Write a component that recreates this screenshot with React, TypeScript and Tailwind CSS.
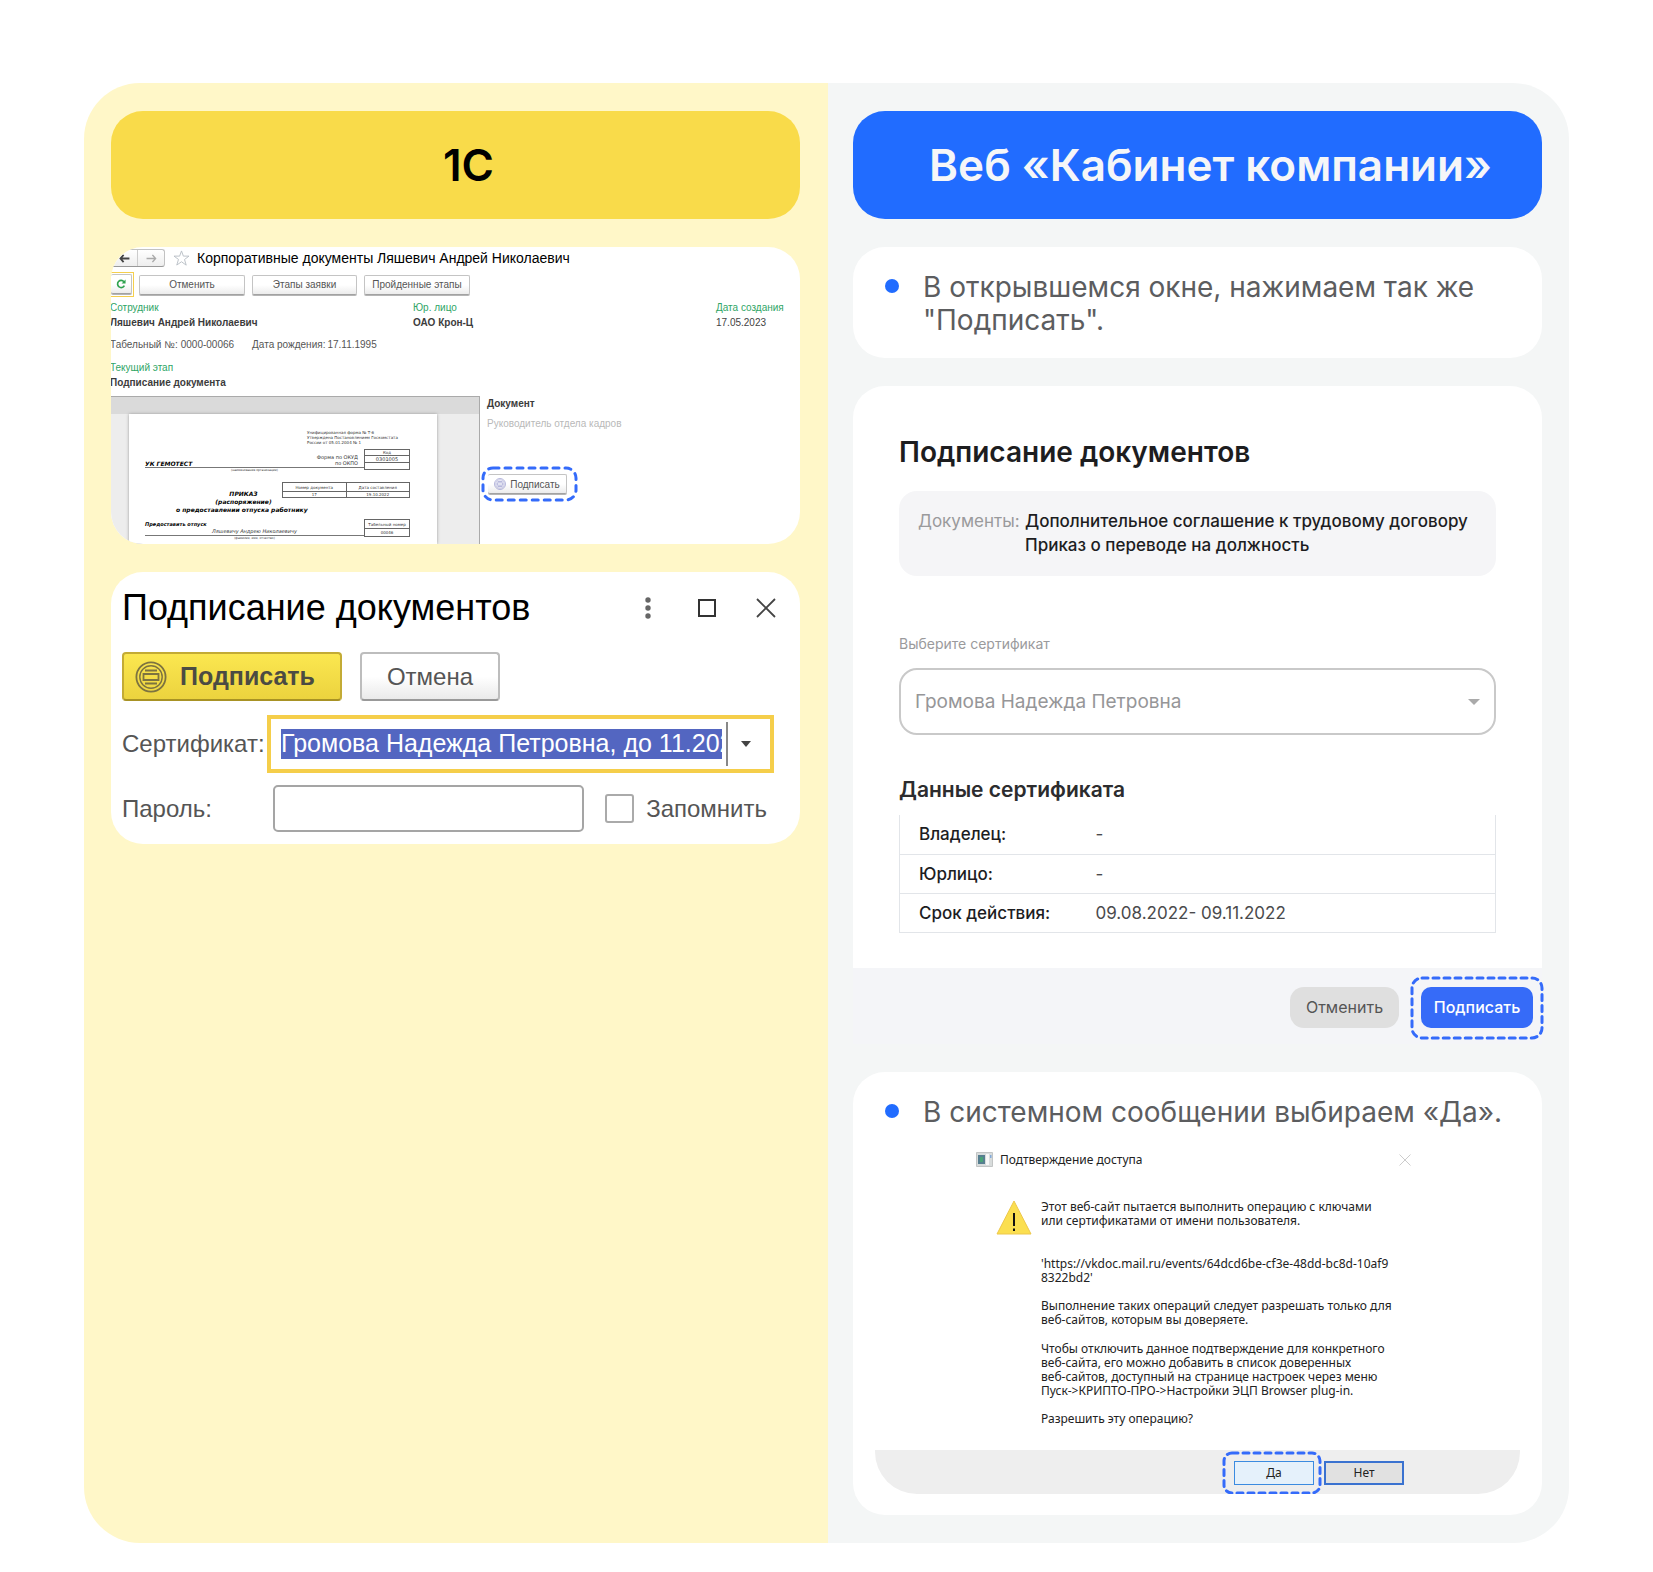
import React, { useState } from "react";

const inter = "font-['Inter','Liberation_Sans',sans-serif]";
const arial = "font-['Liberation_Sans',sans-serif]";

function Outline({ radius, dash, width = 3 }: { radius: number; dash: string; width?: number }) {
  return (
    <svg aria-hidden="true" className="pointer-events-none absolute inset-0 h-full w-full overflow-visible" fill="none">
      <rect width="100%" height="100%" rx={radius} stroke="#346bfa" strokeWidth={width} strokeDasharray={dash} strokeLinecap="round" />
    </svg>
  );
}

function SealIcon({ className, color }: { className: string; color: string }) {
  return (
    <svg aria-hidden="true" viewBox="0 0 32 32" className={className} fill="none" stroke={color} strokeWidth="1.8">
      <circle cx="16" cy="16" r="14.6" />
      <circle cx="16" cy="16" r="11.2" strokeWidth="1.4" />
      <path d="M10 9.5h12M8.5 13h15v6h-15zM10 22.500h12" />
    </svg>
  );
}

const greyButton =
  "flex items-center justify-center rounded-[2px] border border-[#c4c4c4] border-b-[#a2a2a2] bg-linear-to-b from-white from-50% to-[#ececec] text-[#555] shadow-[0_1px_0_#b5b5b5]";

function Field({ label, value, bold = true }: { label: string; value: string; bold?: boolean }) {
  return (
    <div>
      <div className="text-[#2fa566]">{label}</div>
      <div className={bold ? "font-bold text-[#3c3c3c]" : "text-[#444]"}>{value}</div>
    </div>
  );
}

function OrderPreview() {
  return (
    <div className="mr-[42px] ml-[18px] flex flex-1 flex-col bg-white pt-4 pr-[27px] pl-[16px] font-['DejaVu_Sans',sans-serif] text-[5px] leading-[5px] text-[#333] shadow-[0_0_3px_#999]">
      <div className="ml-[162px] text-[4px] leading-[5px] whitespace-nowrap">
        <p>Унифицированная форма № Т-6</p>
        <p>Утверждена Постановлением Госкомстата</p>
        <p>России от 05.01.2004 № 1</p>
      </div>
      <div className="mt-1 flex">
        <div className="flex-1">
          <div className="flex h-[19px] items-end justify-between border-b border-[#777] pb-px">
            <span className="text-[6px] font-bold italic text-black">УК ГЕМОТЕСТ</span>
            <span className="pr-[6px] text-right text-[5px] leading-[6px]">Форма по ОКУД<br />по ОКПО</span>
          </div>
          <p className="text-center text-[3px] leading-[4px]">(наименование организации)</p>
        </div>
        <table className="h-[19px] w-[46px] border-collapse text-center">
          <tbody>
            <tr><td className="h-[6px] border border-[#666] p-0 text-[4px] leading-[5px]">Код</td></tr>
            <tr><td className="h-[6px] border border-[#666] p-0 leading-[6px]">0301005</td></tr>
            <tr><td className="h-[7px] border border-[#666] p-0" /></tr>
          </tbody>
        </table>
      </div>
      <div className="mt-[10px] flex items-start justify-end">
        <p className="mt-[8px] flex-1 pl-[60px] text-center text-[6px] leading-[8px] font-bold italic text-black">ПРИКАЗ<br />(распоряжение)</p>
        <table className="w-[128px] table-fixed border-collapse text-center text-[4px]">
          <tbody>
            <tr><td className="h-[9px] border border-[#666] p-0">Номер документа</td><td className="border border-[#666] p-0">Дата составления</td></tr>
            <tr><td className="h-[6px] border border-[#666] p-0">17</td><td className="border border-[#666] p-0">19.10.2022</td></tr>
          </tbody>
        </table>
      </div>
      <p className="pl-[31px] text-[6px] leading-[8px] font-bold italic text-black">о предоставлении отпуска работнику</p>
      <div className="mt-[5px] flex">
        <div className="flex-1">
          <div className="h-[17px] border-b border-[#777] pt-[2px]">
            <p className="text-[5px] leading-[7px] font-bold italic text-black">Предоставить отпуск</p>
            <p className="text-center text-[5px] leading-[7px] italic">Ляшевичу Андрею Николаевичу</p>
          </div>
          <p className="text-center text-[3px] leading-[4px]">(фамилия, имя, отчество)</p>
        </div>
        <table className="h-[17px] w-[46px] table-fixed border-collapse text-center text-[4px] whitespace-nowrap">
          <tbody>
            <tr><td className="h-[9px] border border-[#666] p-0">Табельный номер</td></tr>
            <tr><td className="h-[8px] border border-[#666] p-0">00046</td></tr>
          </tbody>
        </table>
      </div>
    </div>
  );
}

function DocumentWindow() {
  return (
    <section className={`${arial} flex h-[297px] flex-col overflow-hidden rounded-[32px] bg-white text-[10px]`}>
      <header className="mt-[2px] flex h-[18px] items-center">
        <div className="flex h-[18px] w-[54px] rounded-r-[3px] border border-l-0 border-[#c2c2c2] border-b-[#999] bg-linear-to-b from-white to-[#eee]">
          <button aria-label="Назад" className="flex flex-1 items-center justify-center">
            <svg viewBox="0 0 12 10" className="h-[9px] w-[11px]" fill="none" stroke="#444" strokeWidth="2"><path d="M5 1 1.500 5 5 9M1.500 5H11.500" /></svg>
          </button>
          <button aria-label="Вперёд" className="flex flex-1 items-center justify-center border-l border-[#ccc]">
            <svg viewBox="0 0 12 10" className="h-[9px] w-[11px]" fill="none" stroke="#aaa" strokeWidth="1.600"><path d="M7 1 10.500 5 7 9M10.500 5H.5" /></svg>
          </button>
        </div>
        <svg viewBox="0 0 18 17" className="ml-[8px] h-[16px] w-[17px]" fill="none" stroke="#b9bfc5" strokeWidth="1"><path d="m9 1 2 5.500h6l-4.800 3.600 1.800 6L9 12.500 4 16l1.800-6L1 6.500h6z" /></svg>
        <h2 className="ml-[7px] text-[14px] whitespace-nowrap text-black">Корпоративные документы Ляшевич Андрей Николаевич</h2>
      </header>
      <div className="mt-[5px] flex h-[25px] items-center gap-[7px]">
        <div className="-mr-[2px] h-[25px] w-[23px] border border-l-0 border-[#f5cf4d] py-px pr-px">
          <button aria-label="Обновить" className={`${greyButton} h-[20px] w-full border-l-0`}>
            <svg viewBox="0 0 12 12" className="h-[10px] w-[10px]" fill="none" stroke="#2fa24e" strokeWidth="2"><path d="M9.500 3.200A4.300 4.300 0 1 0 10 8" /><path d="M11.500.5v4.800H6.700z" fill="#2fa24e" stroke="none" /></svg>
          </button>
        </div>
        <button className={`${greyButton} h-[20px] w-[106px]`}>Отменить</button>
        <button className={`${greyButton} h-[20px] w-[105px]`}>Этапы заявки</button>
        <button className={`${greyButton} h-[20px] w-[106px]`}>Пройденные этапы</button>
      </div>
      <div className="mt-[3px] -ml-px grid grid-cols-[303fr_303fr_84fr] leading-[15px] whitespace-nowrap">
        <Field label="Сотрудник" value="Ляшевич Андрей Николаевич" />
        <Field label="Юр. лицо" value="ОАО Крон-Ц" />
        <Field label="Дата создания" value="17.05.2023" bold={false} />
      </div>
      <p className="mt-[7px] -ml-px flex leading-[15px] text-[#555]">
        <span>Табельный №:</span><span className="ml-[3px]">0000-00066</span>
        <span className="ml-[18px]">Дата рождения:</span><span className="ml-[2px]">17.11.1995</span>
      </p>
      <div className="mt-[8px] -ml-px leading-[15px]"><Field label="Текущий этап" value="Подписание документа" /></div>
      <div className="mt-[6px] flex min-h-0 flex-1">
        <div className="flex w-[369px] flex-col overflow-hidden border-t border-r border-[#aaa] bg-[#ededed]">
          <div className="h-[17px] shrink-0 bg-[#dadada]" />
          <OrderPreview />
        </div>
        <div className="pl-[7px]">
          <p className="font-bold leading-[15px] text-[#3c3c3c]">Документ</p>
          <p className="mt-[5px] leading-[15px] text-[#b9b9b9]">Руководитель отдела кадров</p>
          <div className="relative mt-[37px] -ml-[4px] inline-block py-[6px] pr-[9px] pl-[5px]">
            <Outline radius={10} dash="6 6" width={3} />
            <button className={`${greyButton} h-[20px] w-[79px] gap-[4px] border-l-0`}>
              <SealIcon className="h-[12px] w-[12px]" color="#8d8fc9" />Подписать
            </button>
          </div>
        </div>
      </div>
    </section>
  );
}

function SignDialog() {
  const [remember, setRemember] = useState(false);
  return (
    <section className={`${arial} rounded-[32px] bg-white pt-[16px] pr-[26px] pb-[12px] pl-[11px] text-[24px] text-[#555]`}>
      <header className="-mr-[2px] flex h-[40px] items-center text-[#444]">
        <h2 className="flex-1 text-[36px] leading-[40px] whitespace-nowrap text-black">Подписание документов</h2>
        <button aria-label="Меню" className="mr-[47px]"><svg viewBox="0 0 6 22" className="h-[22px] w-[6px]" fill="#666"><circle cx="3" cy="3" r="2.700" /><circle cx="3" cy="11" r="2.700" /><circle cx="3" cy="19" r="2.700" /></svg></button>
        <button aria-label="Развернуть" className="mr-[40px]"><svg viewBox="0 0 18 18" className="h-[18px] w-[18px]" fill="none" stroke="#333" strokeWidth="2"><path d="M1 1h16v16H1z" /></svg></button>
        <button aria-label="Закрыть"><svg viewBox="0 0 20 20" className="h-[20px] w-[20px]" stroke="#444" strokeWidth="1.800"><path d="m1 1 18 18M19 1 1 19" /></svg></button>
      </header>
      <div className="mt-[24px] flex gap-[18px]">
        <button className="flex h-[49px] w-[220px] items-center gap-[13px] rounded-[4px] border-2 border-[#c3ab35] border-b-[#a89224] bg-linear-to-b from-[#fbe750] to-[#ecd33e] pl-[11px] text-[25px] font-bold text-[#4b4b43]">
          <SealIcon className="h-[32px] w-[32px]" color="#7d7340" />Подписать
        </button>
        <button className="h-[49px] w-[140px] rounded-[4px] border-2 border-[#bdbdbd] border-b-[#999] bg-linear-to-b from-white from-50% to-[#eaeaea]">Отмена</button>
      </div>
      <div className="mt-[14px] flex items-center">
        <label htmlFor="cert" className="w-[145px]">Сертификат:</label>
        <div className="flex h-[58px] min-w-0 flex-1 items-center border-[4px] border-[#f5ce4a] pl-[10px]">
          <input id="cert" readOnly defaultValue="Громова Надежда Петровна, до 11.2022" className="h-[30px] min-w-0 flex-1 bg-[#5366c1] text-[25px] text-white outline-none" />
          <button aria-label="Выбрать сертификат" className="ml-[4px] flex h-[44px] w-[44px] items-center border-l-2 border-[#888] pl-[13px]">
            <svg viewBox="0 0 10 6" className="h-[6px] w-[10px]" fill="#444"><path d="M0 0h10L5 6z" /></svg>
          </button>
        </div>
      </div>
      <div className="mt-[12px] flex items-center">
        <label htmlFor="password" className="w-[151px]">Пароль:</label>
        <input id="password" type="password" className="h-[47px] min-w-0 flex-1 rounded-[5px] border-2 border-[#a5a5a5] px-2 outline-none" />
        <input id="remember" type="checkbox" checked={remember} onChange={(e) => setRemember(e.target.checked)} className="ml-[21px] h-[29px] w-[29px] appearance-none rounded-[3px] border-2 border-[#aaa] checked:bg-[#f5ce4a]" />
        <label htmlFor="remember" className="ml-[12px] mr-[7px]">Запомнить</label>
      </div>
    </section>
  );
}

function Step({ children }: { children: React.ReactNode }) {
  return (
    <div className="flex text-[28px] leading-[33px] text-[#5c5d5f]">
      <span aria-hidden="true" className="mt-[8px] mr-[24px] h-[14px] w-[14px] shrink-0 rounded-full bg-[#216cff]" />
      <p>{children}</p>
    </div>
  );
}

const certificate = [
  ["Владелец:", "-"],
  ["Юрлицо:", "-"],
  ["Срок действия:", "09.08.2022- 09.11.2022"],
];

function WebSignDialog() {
  return (
    <section>
      <div className="rounded-t-[32px] bg-white px-[46px] pt-[48px] pb-[35px]">
        <h2 className="text-[28px] leading-[36px] font-semibold whitespace-nowrap text-[#1d1d1f]">Подписание документов</h2>
        <div className="mt-[21px] flex h-[85px] rounded-[18px] bg-[#f5f5f7] pt-[18px] pl-[19px] text-[17px] leading-[24px] whitespace-nowrap">
          <span className="w-[107px] text-[#9a9a9c]">Документы:</span>
          <div className="font-medium text-[#1d1d1f]"><p>Дополнительное соглашение к трудовому договору</p><p>Приказ о переводе на должность</p></div>
        </div>
        <label htmlFor="web-cert" className="mt-[58px] block text-[14px] leading-[20px] text-[#9a9a9c]">Выберите сертификат</label>
        <div className="relative mt-[14px]">
          <select id="web-cert" className="block h-[67px] w-full appearance-none rounded-[18px] border-2 border-[#c9c9c9] bg-white pt-px pl-[14px] text-[19px] text-[#969698]">
            <option>Громова Надежда Петровна</option>
          </select>
          <svg viewBox="0 0 12 6" className="pointer-events-none absolute top-[31px] right-[16px] h-[6px] w-[12px]" fill="#aaa"><path d="M0 0h12L6 6z" /></svg>
        </div>
        <h3 className="mt-[43px] text-[21px] leading-[24px] font-semibold text-[#2c2c2e]">Данные сертификата</h3>
        <table className="mt-[13px] w-full border-x border-[#e2e5e9] text-left text-[17px] leading-[22px] text-[#4a4a4c]">
          <tbody>
            {certificate.map(([name, value]) => (
              <tr key={name} className="h-[39px] border-b border-[#e2e5e9]">
                <th scope="row" className="w-[196px] p-0 pl-[19px] font-medium text-[#1d1d1f]">{name}</th>
                <td className="p-0">{value}</td>
              </tr>
            ))}
          </tbody>
        </table>
      </div>
      <footer className="flex h-[76px] items-start justify-end bg-[#f4f5f8] pt-[10px] text-[16px]">
        <button className="mt-[9px] h-[41px] w-[109px] rounded-[14px] bg-[#dfdfdf] text-[#555]">Отменить</button>
        <div className="relative ml-[13px] px-[9px] pt-[9px] pb-[10px]">
          <Outline radius={10} dash="6 5" />
          <button className="block h-[41px] w-[112px] rounded-[10px] bg-[#366bf8] font-medium text-white">Подписать</button>
        </div>
      </footer>
    </section>
  );
}

function AccessDialog() {
  return (
    <div className="mt-[22px] ml-[-10px] mr-[-10px] flex flex-col overflow-hidden rounded-b-[42px] font-['Noto_Sans','Open_Sans',sans-serif] text-[12px] text-[#222]">
      <header className="flex h-[18px] items-center pr-[109px] pl-[101px]">
        <svg viewBox="0 0 17 15" className="h-[15px] w-[17px]"><path fill="#d8dcdc" stroke="#c2c5c5" d="M.5.5h16v14H.5z" /><path fill="#577f90" d="M2 3h7v9H2z" /><path fill="#49a377" d="M4 5h3v5H4z" /><path fill="#f7f7f7" d="M10 2h3v11h-3z" /><path fill="#83a9d8" d="M14 3h1.500v3H14z" /></svg>
        <h3 className="ml-[7px] flex-1">Подтверждение доступа</h3>
        <button aria-label="Закрыть"><svg viewBox="0 0 12 12" className="h-[12px] w-[12px]" stroke="#ccc"><path d="m.5.5 11 11M11.500.5l-11 11" /></svg></button>
      </header>
      <div className="flex pt-[31px] pl-[121px] whitespace-nowrap">
        <svg viewBox="0 0 36 35" className="h-[35px] w-[36px] shrink-0"><path d="M18 1 35 34H1z" fill="#fbdf50" stroke="#edc74a" strokeLinejoin="round" /><path d="M18 13v13M18 28.500v2.500" stroke="#111" strokeWidth="2" /></svg>
        <div className="ml-[9px] flex flex-col gap-[14px] leading-[14px]">
          <p className="mb-[15px]">Этот веб-сайт пытается выполнить операцию с ключами<br />или сертификатами от имени пользователя.</p>
          <p>'https://vkdoc.mail.ru/events/64dcd6be-cf3e-48dd-bc8d-10af9<br />8322bd2'</p>
          <p>Выполнение таких операций следует разрешать только для<br />веб-сайтов, которым вы доверяете.</p>
          <p className="pt-px">Чтобы отключить данное подтверждение для конкретного<br />веб-сайта, его можно добавить в список доверенных<br />веб-сайтов, доступный на странице настроек через меню<br />Пуск-&gt;КРИПТО-ПРО-&gt;Настройки ЭЦП Browser plug-in.</p>
          <p>Разрешить эту операцию?</p>
        </div>
      </div>
      <footer className="mt-[24px] flex h-[44px] items-start justify-end bg-[#eee] pt-[3px] pr-[116px]">
        <div className="relative px-[10px] py-[8px] pr-[6px]">
          <Outline radius={8} dash="6 5" />
          <button className="block h-[24px] w-[80px] border border-[#3b8be0] bg-[#e5f1fb]">Да</button>
        </div>
        <button className="mt-[8px] ml-[4px] h-[24px] w-[80px] border-2 border-[#3a72d0] bg-[#e1e1e1]">Нет</button>
      </footer>
    </div>
  );
}

export default function App() {
  return (
    <main className={`${inter} min-h-screen bg-white px-[84px] pt-[83px] pb-[28px]`}>
      <div className="grid grid-cols-[minmax(0,744fr)_minmax(0,741fr)] overflow-hidden rounded-[56px]">
        <div className="flex flex-col gap-7 bg-[#fff7c8] p-7 pl-[27px]">
          <h1 className="flex h-[108px] items-center justify-center rounded-[32px] bg-[#f9db4a] pl-[26px] text-[44px] font-semibold text-black">1С</h1>
          <DocumentWindow />
          <SignDialog />
        </div>
        <div className="flex flex-col gap-7 bg-[#f4f6f6] pt-7 pr-[27px] pb-7 pl-[25px]">
          <h1 className="flex h-[108px] items-center justify-center rounded-[32px] bg-[#216cff] pl-[26px] text-[44px] font-semibold whitespace-nowrap text-[#f5f6f8]">Веб «Кабинет компании»</h1>
          <section className="rounded-[32px] bg-white px-8 pt-[24px] pb-[21px]">
            <Step>В открывшемся окне, нажимаем так же<br />"Подписать".</Step>
          </section>
          <WebSignDialog />
          <section className="rounded-[32px] bg-white px-8 pt-[24px] pb-[21px]">
            <Step>В системном сообщении выбираем «Да».</Step>
            <AccessDialog />
          </section>
        </div>
      </div>
    </main>
  );
}
